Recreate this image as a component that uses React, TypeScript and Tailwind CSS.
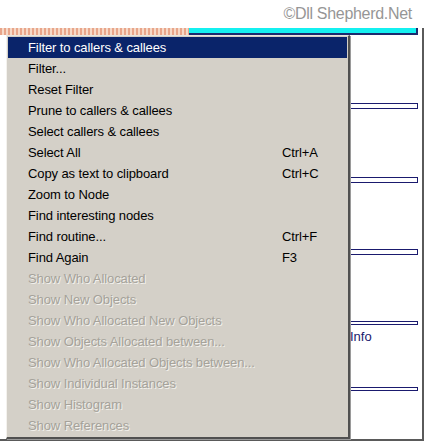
const items: { label: string; shortcut?: string; disabled?: boolean }[] = [
  { label: 'Filter to callers & callees' },
  { label: 'Filter...' },
  { label: 'Reset Filter' },
  { label: 'Prune to callers & callees' },
  { label: 'Select callers & callees' },
  { label: 'Select All', shortcut: 'Ctrl+A' },
  { label: 'Copy as text to clipboard', shortcut: 'Ctrl+C' },
  { label: 'Zoom to Node' },
  { label: 'Find interesting nodes' },
  { label: 'Find routine...', shortcut: 'Ctrl+F' },
  { label: 'Find Again', shortcut: 'F3' },
  { label: 'Show Who Allocated', disabled: true },
  { label: 'Show New Objects', disabled: true },
  { label: 'Show Who Allocated New Objects', disabled: true },
  { label: 'Show Objects Allocated between...', disabled: true },
  { label: 'Show Who Allocated Objects between...', disabled: true },
  { label: 'Show Individual Instances', disabled: true },
  { label: 'Show Histogram', disabled: true },
  { label: 'Show References', disabled: true },
]

function NodeBar() {
  return <div className="h-[6px] w-[68px] border border-[#1a1a6e] bg-white" />
}

export default function App() {
  return (
    <div className="relative h-[447px] w-[427px] overflow-hidden bg-white font-['Liberation_Sans',Arial,sans-serif]">
      {/* watermark */}
      <div className="flex h-[28px] justify-end pr-[15px] pt-[2px] text-[16px] tracking-[-0.3px] text-[#969696]">
        ©Dll Shepherd.Net
      </div>

      {/* window behind the menu */}
      <div className="flex h-[413px]">
        <div className="flex w-[424px] flex-col border-r-2 border-b-2 border-[#5a5a5a]">
          <div className="flex h-[7px]">
            <div className="w-[189px] bg-[repeating-linear-gradient(90deg,#e8a58a_0px,#e8a58a_2px,#f6d9c8_2px,#f6d9c8_4px)]" />
            <div className="w-[229px] border-r-2 border-b-2 border-[#1c2a6e] bg-[#14f0f0]" />
          </div>
          <div className="flex flex-1 flex-col items-end pr-[4px]">
            <div className="mt-[68px]"><NodeBar /></div>
            <div className="mt-[68px]"><NodeBar /></div>
            <div className="mt-[66px]"><NodeBar /></div>
            <div className="mt-[66px] h-[4px] w-[68px] border border-[#1a1a6e]" />
            <div className="w-[68px] pt-[2px] text-[13px] text-[#1a1a6e]">Info</div>
            <div className="mt-[40px] h-[4px] w-[68px] border border-[#1a1a6e]" />
          </div>
        </div>
      </div>

      {/* context menu */}
      <div className="absolute left-[6px] top-[35px] w-[344px] border-t border-l border-t-[#e8e6e0] border-l-[#f4f2ee] border-r-2 border-b-2 border-r-[#505050] border-b-[#505050] bg-[#d4d0c8] px-[1px] py-[1px] shadow-[1px_1px_0_#9a9a9a]">
        {items.map((item, i) => {
          const selected = i === 0
          return (
            <div
              key={item.label}
              className={`flex h-[21px] items-center pl-[20px] text-[13px] tracking-[-0.1px] ${
                selected
                  ? 'bg-[#0a246a] text-white'
                  : item.disabled
                    ? 'text-[#a5a29a] [text-shadow:1px_1px_0_#f2f0ec]'
                    : 'text-black'
              }`}
            >
              <span className="w-[254px] whitespace-nowrap">{item.label}</span>
              {item.shortcut && <span>{item.shortcut}</span>}
            </div>
          )
        })}
      </div>
    </div>
  )
}
